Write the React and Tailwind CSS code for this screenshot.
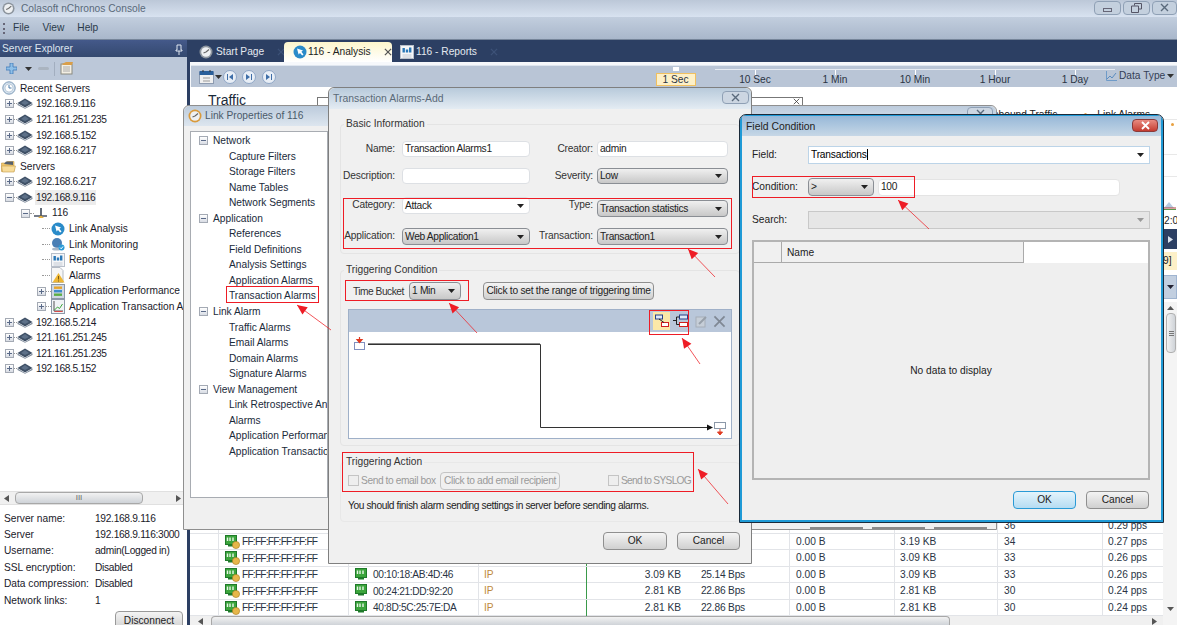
import React from "react";

const FONT = "font-['Liberation_Sans',Arial,sans-serif]";

function PlusBox({ minus }) {
  return (
    <span className="flex h-[9px] w-[9px] shrink-0 items-center justify-center border border-[#a4aab4] bg-gradient-to-b from-white to-[#d8dce4]">
      <svg width="7" height="7" viewBox="0 0 7 7">
        <path d={minus ? "M1 3.5H6" : "M1 3.5H6M3.5 1V6"} stroke="#5a6a88" strokeWidth="1" />
      </svg>
    </span>
  );
}
function Device() {
  return (
    <svg width="16" height="11" viewBox="0 0 16 11" className="shrink-0">
      <path d="M8 0.5 15.5 5 8 9.5 0.5 5Z" fill="#3f5066" />
      <path d="M0.5 5.5 8 10 15.5 5.5 15.5 7 8 10.7 0.5 7Z" fill="#7d8a9a" />
      <path d="M8 2 12 5 8 7 4 5Z" fill="#5d7088" />
    </svg>
  );
}
function Clock({ size = 14, ring = "#8d959e" }) {
  return (
    <svg width={size} height={size} viewBox="0 0 14 14" className="shrink-0">
      <circle cx="7" cy="7" r="6.5" fill={ring} />
      <circle cx="7" cy="7" r="4.8" fill="#eef0f2" />
      <path d="M7 7 10 4.5M7 7 4.5 8" stroke="#666" strokeWidth="1.1" />
    </svg>
  );
}
function Recent() {
  return (
    <svg width="14" height="14" viewBox="0 0 14 14" className="shrink-0">
      <circle cx="7" cy="7" r="6.2" fill="#d5e2ee" stroke="#7f9cb8" />
      <circle cx="7" cy="7" r="4" fill="#fff" stroke="#9db4ca" strokeWidth=".6" />
      <path d="M7 4V7H9.5" stroke="#4a7aa8" fill="none" />
    </svg>
  );
}
function Folder() {
  return (
    <svg width="15" height="13" viewBox="0 0 15 13" className="shrink-0">
      <path d="M0.5 3H5L6.5 1.5H13V11.5H0.5Z" fill="#f0c66a" stroke="#c49a4a" strokeWidth=".6" />
      <path d="M3 4 5 1.5 12 1.5 12 5Z" fill="#55606e" />
      <path d="M0.5 6H14.5L13 12H1.5Z" fill="#f7dc9a" stroke="#c49a4a" strokeWidth=".6" />
    </svg>
  );
}
function LinkIcon() {
  return (
    <svg width="14" height="12" viewBox="0 0 14 12" className="shrink-0">
      <path d="M0 9H13" stroke="#3b4656" strokeWidth="1.4" />
      <path d="M7 1V9" stroke="#3b4656" strokeWidth="1.6" />
      <path d="M4 11 7 8.5 10 11Z" fill="#e8b13c" />
    </svg>
  );
}
function AnalysisIcon({ size = 14 }) {
  return (
    <svg width={size} height={size} viewBox="0 0 14 14" className="shrink-0">
      <circle cx="7" cy="7" r="6.5" fill="#2a8bc9" />
      <path d="M4 3.5 10 5.5 8.4 6.8 10.5 9.5 9.2 10.6 7 7.9 5.6 9.5Z" fill="#fff" />
    </svg>
  );
}
function MonitorIcon() {
  return (
    <svg width="14" height="14" viewBox="0 0 14 14" className="shrink-0">
      <circle cx="6" cy="6" r="5" fill="#4a7fb5" />
      <ellipse cx="5.5" cy="12" rx="4.5" ry="1.6" fill="#aab8c8" />
      <circle cx="10.5" cy="10.5" r="3" fill="#2a9ad6" />
      <path d="M9 10.5 10.2 11.8 12 9.5" stroke="#fff" fill="none" />
    </svg>
  );
}
function ReportIcon({ size = 14 }) {
  return (
    <svg width={size} height={size} viewBox="0 0 14 14" className="shrink-0">
      <rect x=".5" y=".5" width="13" height="13" fill="#f5f6f8" stroke="#b8bfca" />
      <rect x="2.5" y="3" width="2.4" height="4.5" fill="#2a78b8" />
      <rect x="5.8" y="4.5" width="2.4" height="3" fill="#2a78b8" />
      <rect x="9" y="2.5" width="2.4" height="5" fill="#2a78b8" />
      <path d="M2.5 10H11.5M2.5 12H11.5" stroke="#c4cad4" />
    </svg>
  );
}
function AlarmIcon() {
  return (
    <svg width="14" height="16" viewBox="0 0 14 16" className="shrink-0">
      <path d="M.5.5H9L12 3.5V15.5H.5Z" fill="#f6f6f6" stroke="#b4bac4" />
      <path d="M7.5 6 13.5 15.5H1.5Z" fill="#eeb634" />
      <path d="M7.5 9V12.5M7.5 13.5V14.5" stroke="#7a5a10" />
    </svg>
  );
}
function PerfIcon() {
  return (
    <svg width="14" height="15" viewBox="0 0 14 15" className="shrink-0">
      <rect x=".5" y=".5" width="13" height="14" fill="#cfd8e4" stroke="#8c98a8" />
      <rect x="3" y="2.5" width="8" height="2.4" fill="#e8a52c" />
      <rect x="3" y="6" width="8" height="2.4" fill="#3f8ccc" />
      <rect x="3" y="9.5" width="8" height="2.4" fill="#5cae44" />
    </svg>
  );
}
function TransIcon() {
  return (
    <svg width="14" height="15" viewBox="0 0 14 15" className="shrink-0">
      <rect x=".5" y=".5" width="13" height="14" fill="#f1f3f6" stroke="#8c98a8" />
      <path d="M3 2V12H12" stroke="#555" fill="none" />
      <path d="M3.5 11 6.5 8 8.5 9.5 11.5 5" stroke="#3ba53b" fill="none" />
      <path d="M3.5 12.5H11.5" stroke="#d84a4a" />
    </svg>
  );
}
function NicIcon({ warn }) {
  return (
    <svg width="15" height="14" viewBox="0 0 15 14" className="shrink-0">
      <rect x=".5" y=".5" width="11" height="9" fill="#3ca53c" stroke="#1f7a2a" />
      <path d="M2.5 2.5V6M5 2.5V6M8 2.5V6" stroke="#e8f6e8" strokeWidth="1.4" />
      <rect x="3" y="9.5" width="6" height="2" fill="#1f7a2a" />
      {warn && <circle cx="11" cy="10" r="3.6" fill="#e6b64a" stroke="#a87a1c" strokeWidth=".6" />}
    </svg>
  );
}
function X({ size = 9, color = "#5a6a7c", width = 1.4 }) {
  return (
    <svg width={size} height={size} viewBox="0 0 9 9" className="shrink-0">
      <path d="M1 1 8 8M8 1 1 8" stroke={color} strokeWidth={width} />
    </svg>
  );
}
function Caret({ color = "#222" }) {
  return (
    <svg width="7" height="4" viewBox="0 0 7 4" className="shrink-0">
      <path d="M0 0H7L3.5 4Z" fill={color} />
    </svg>
  );
}
function Play({ dir, cls = "#9aa" }) {
  return (
    <svg width="5" height="7" viewBox="0 0 5 7" className="shrink-0">
      <path d={dir === "l" ? "M5 0V7L0 3.5Z" : "M0 0V7L5 3.5Z"} fill={cls} />
    </svg>
  );
}
function Nav({ bars }) {
  return (
    <svg width="14" height="14" viewBox="0 0 14 14" className="shrink-0">
      <circle cx="7" cy="7" r="6.5" fill="#e8eef6" stroke="#8fa6c6" />
      <path d={bars} fill="#3f6ea8" />
    </svg>
  );
}

const treeRows = [
  { x: 2, icon: <Recent />, t: "Recent Servers" },
  ...["192.168.9.116", "121.161.251.235", "192.168.5.152", "192.168.6.217"].map((t) => ({ box: 1, dev: 1, t })),
  { x: 1, icon: <Folder />, t: "Servers" },
  { box: 1, dev: 1, t: "192.168.6.217" },
  { box: 2, dev: 1, t: "192.168.9.116", sel: 1 },
  { x: 22, box: 2, icon: <LinkIcon />, t: "116", sub: 1 },
  { x: 51, icon: <AnalysisIcon />, t: "Link Analysis", lv: 1 },
  { x: 51, icon: <MonitorIcon />, t: "Link Monitoring", lv: 1 },
  { x: 51, icon: <ReportIcon />, t: "Reports", lv: 1 },
  { x: 51, icon: <AlarmIcon />, t: "Alarms", lv: 1 },
  { x: 38, box: 1, icon: <PerfIcon />, t: "Application Performance", lv: 2 },
  { x: 38, box: 1, icon: <TransIcon />, t: "Application Transaction A", lv: 2 },
  ...["192.168.5.214", "121.161.251.245", "121.161.251.235", "192.168.5.152"].map((t) => ({ box: 1, dev: 1, t })),
];

function TreeRow({ r }) {
  if (r.dev) {
    return (
      <div className="flex h-[15.6px] items-center whitespace-nowrap pl-[5px]">
        <PlusBox minus={r.box === 2} />
        <span className="w-[3px] shrink-0 border-t border-dotted border-[#999]" />
        <Device />
        <span className={`ml-[2px] px-[1px] leading-[15px] tracking-[-0.4px] ${r.sel ? "bg-[#ececec]" : ""}`}>{r.t}</span>
      </div>
    );
  }
  if (r.sub) {
    return (
      <div className="flex h-[15.6px] items-center whitespace-nowrap pl-[21px]">
        <PlusBox minus />
        <span className="w-[4px] shrink-0 border-t border-dotted border-[#999]" />
        <LinkIcon />
        <span className="ml-[4px]">{r.t}</span>
      </div>
    );
  }
  if (r.lv === 1) {
    return (
      <div className="flex h-[15.6px] items-center whitespace-nowrap pl-[42px]">
        <span className="mr-[1px] w-[8px] shrink-0 border-t border-dotted border-[#999]" />
        {r.icon}
        <span className="ml-[4px]">{r.t}</span>
      </div>
    );
  }
  if (r.lv === 2) {
    return (
      <div className="flex h-[15.6px] items-center whitespace-nowrap pl-[37px]">
        <PlusBox />
        <span className="w-[5px] shrink-0 border-t border-dotted border-[#999]" />
        {r.icon}
        <span className="ml-[4px]">{r.t}</span>
      </div>
    );
  }
  return (
    <div className="flex h-[15.6px] items-center whitespace-nowrap" style={{ paddingLeft: r.x }}>
      {r.icon}
      <span className="ml-[4px]">{r.t}</span>
    </div>
  );
}

function Sidebar() {
  const info = [
    ["Server name:", "192.168.9.116"],
    ["Server", "192.168.9.116:3000"],
    ["Username:", "admin(Logged in)"],
    ["SSL encryption:", "Disabled"],
    ["Data compression:", "Disabled"],
    ["Network links:", "1"],
  ];
  return (
    <aside className="flex h-full w-[187px] shrink-0 flex-col bg-white">
      <div className="flex h-[17px] shrink-0 items-center justify-between bg-gradient-to-b from-[#44598a] to-[#34496f] px-[2px] pt-[1px] text-[#dde4ee]">
        <span>Server Explorer</span>
        <svg width="8" height="11" viewBox="0 0 8 11" className="mr-[2px]">
          <path d="M2 1H6V6H7V7H1V6H2ZM4 7V11" stroke="#dfe6f0" fill="none" />
        </svg>
      </div>
      <div className="flex h-[23px] shrink-0 items-center bg-[#bcc8d9] pl-[6px]">
        <svg width="11" height="11" viewBox="0 0 11 11">
          <path d="M4 0H7V4H11V7H7V11H4V7H0V4H4Z" fill="#8fc0e8" stroke="#3f7ab8" strokeWidth=".8" />
        </svg>
        <span className="ml-[8px]"><Caret color="#333" /></span>
        <span className="ml-[6px] h-[3px] w-[11px] rounded-sm bg-[#aab4c0]" />
        <span className="ml-[5px] h-[14px] w-px bg-[#a2aebf]" />
        <svg width="14" height="13" viewBox="0 0 14 13" className="ml-[5px]">
          <rect x="1" y="2" width="11" height="10" fill="#f3efe4" stroke="#8a8a80" />
          <path d="M2 2 6 0H13L12 3H3Z" fill="#d99f4a" />
          <path d="M3 5H10M3 7H10M3 9H10" stroke="#aaa" />
        </svg>
      </div>
      <div className="min-h-0 flex-1 overflow-hidden pt-[0.5px] text-[#1a1a2a]">
        {treeRows.map((r, i) => (
          <TreeRow key={i} r={r} />
        ))}
      </div>
      <div className="flex h-[14px] shrink-0 items-center border-y border-[#e0e0e0] bg-[#f0f0f0] pl-[4px] pr-[6px]">
        <Play dir="l" cls="#555" />
        <span className="ml-[6px] flex h-[12px] w-[128px] items-center justify-center rounded-sm border border-[#a8a8a8] bg-gradient-to-b from-[#f2f2f2] to-[#cfd3d8] text-[8px] leading-none text-[#666]">III</span>
        <span className="flex-1" />
        <Play dir="r" cls="#555" />
      </div>
      <div className="h-[120px] shrink-0 overflow-hidden px-[4px] pt-[5px] text-[#1a1a2a]">
        {info.map(([a, b]) => (
          <div key={a} className="flex h-[16.4px] items-center whitespace-nowrap">
            <span className="w-[91px] shrink-0">{a}</span>
            <span className="tracking-[-0.3px]">{b}</span>
          </div>
        ))}
        <div className="mt-[3px] flex justify-end">
          <button className="h-[18px] w-[68px] rounded-sm border border-[#999] bg-gradient-to-b from-[#f4f4f4] to-[#d2d2d2] text-[#222]">Disconnect</button>
        </div>
      </div>
    </aside>
  );
}

function Tabs() {
  return (
    <div className="flex h-[22px] items-end bg-[#2c3f63] pl-[9px] text-[#e4e9f0]">
      <div className="flex h-[20px] w-[84px] items-center whitespace-nowrap">
        <Clock />
        <span className="ml-[3px] mr-[13px]">Start Page</span>
        <X size={8} color="#3d5278" />
      </div>
      <div className="ml-[1px] flex h-[20px] w-[108px] items-center rounded-t-sm bg-gradient-to-b from-[#fdf6cc] to-white pl-[9px] text-[#222]">
        <AnalysisIcon />
        <span className="ml-[1px] mr-[13px] whitespace-nowrap">116 - Analysis</span>
        <X size={8} color="#555" />
      </div>
      <div className="ml-[8px] flex h-[20px] items-center">
        <ReportIcon />
        <span className="ml-[2px] mr-[13px] whitespace-nowrap">116 - Reports</span>
        <X size={8} color="#3d5278" />
      </div>
    </div>
  );
}

function TimeTick({ t, w = 80 }) {
  return (
    <div className="flex flex-col items-center" style={{ width: w }}>
      <span className="h-[5px] w-px bg-white" />
      <span className="mt-[-1px] leading-[12px] text-[#2a3444]">{t}</span>
    </div>
  );
}

function Toolbar() {
  return (
    <div className="ml-[1px] mt-[3px] flex h-[22px] items-center border-t border-[#dfe6ef] bg-[#b9c5d6] pl-[8px]">
      <svg width="15" height="14" viewBox="0 0 15 14" className="shrink-0">
        <rect x=".5" y="2.5" width="14" height="11" fill="#f0f0f0" stroke="#8d9bb0" />
        <rect x=".5" y="1" width="14" height="4" fill="#2a5f9a" />
        <path d="M4 0V2M11 0V2" stroke="#333" />
        <path d="M4 8H11M4 11H11" stroke="#999" />
      </svg>
      <span className="ml-[1px]"><Caret color="#333" /></span>
      <span className="ml-[1px]"><Nav bars="M4 4H5V10H4ZM10 4V10L6 7Z" /></span>
      <span className="ml-[5px]"><Nav bars="M4 4 8 7 4 10ZM9 4H10V10H9Z" /></span>
      <span className="ml-[6px]"><Nav bars="M4 4 8 7 4 10ZM9 4H10V10H9Z" /></span>
      <div className="ml-[379px] flex items-start self-start">
        <div className="flex w-[41px] flex-col items-center">
          <span className="mt-[1px] h-[4px] w-[6px] bg-white" />
          <span className="mt-[2px] h-[13px] w-[40px] border border-[#f0c060] bg-[#fdf0c8] text-center leading-[12px] text-[#2a3444]">1 Sec</span>
        </div>
        <div className="ml-[19px] mt-[3px] flex border-t border-[#e6ebf2]">
          <TimeTick t="10 Sec" />
          <TimeTick t="1 Min" />
          <TimeTick t="10 Min" />
          <TimeTick t="1 Hour" />
          <TimeTick t="1 Day" w={80} />
        </div>
      </div>
      <div className="mb-[1px] ml-[-9px] flex items-center text-[#344056]">
        <svg width="11" height="10" viewBox="0 0 11 10" className="shrink-0">
          <path d="M.5 0V9.5H11" stroke="#6f9bc8" fill="none" />
          <path d="M1 8 4 5 6 7 10 2" stroke="#5a8cc0" fill="none" />
        </svg>
        <span className="ml-[2px] mr-[2px] whitespace-nowrap">Data Type</span>
        <Caret color="#333" />
      </div>
    </div>
  );
}

const rows = [
  { s: "36", p: "0.29 pps", hide: 1 },
  { s: "34", p: "0.27 pps", z: "3.19 KB", mac: 1 },
  { s: "33", p: "0.26 pps", z: "3.09 KB", mac: 1 },
  { s: "33", p: "0.26 pps", z: "3.09 KB", mac: 1, d: "00:10:18:AB:4D:46", a: "3.09 KB", b: "25.14 Bps" },
  { s: "30", p: "0.24 pps", z: "2.81 KB", mac: 1, d: "00:24:21:DD:92:20", a: "2.81 KB", b: "22.86 Bps" },
  { s: "30", p: "0.24 pps", z: "2.81 KB", mac: 1, d: "40:8D:5C:25:7E:DA", a: "2.81 KB", b: "22.86 Bps" },
];

function Table() {
  return (
    <div className="shrink-0 text-[#2a3444]">
      {rows.map((r, i) => (
        <div key={i} className="grid h-[16.4px] grid-cols-[29px_130px_130px_107px_99px_105px_105px_103px_105px_60px] items-center border-b border-[#e2e4e8] whitespace-nowrap">
          <span className="h-full border-r border-[#e2e4e8]" />
          <span className="flex h-full items-center gap-[2px] border-r border-[#e2e4e8] pl-[6px] tracking-[-0.8px]">
            {!r.hide && <NicIcon warn />}{!r.hide && "FF:FF:FF:FF:FF:FF"}
          </span>
          <span className="flex h-full items-center gap-[3px] border-r border-[#e2e4e8] pl-[6px] tracking-[-0.35px]">
            {r.d && <NicIcon />}{r.d}
          </span>
          <span className="h-full pl-[5px] leading-[16px] text-[#c08a3c]">{r.d && "IP"}</span>
          <span className="h-full border-l border-[#3a9a4a] pr-[4px] text-right leading-[16px]">{r.a}</span>
          <span className="h-full border-r border-[#e2e4e8] pr-[44px] text-right leading-[16px] tracking-[-0.2px]">{r.b}</span>
          <span className="h-full border-r border-[#e2e4e8] pl-[6px] leading-[16px]">{r.mac && "0.00 B"}</span>
          <span className="h-full border-r border-[#e2e4e8] pl-[5px] leading-[16px]">{r.z}</span>
          <span className="h-full border-r border-[#e2e4e8] pl-[6px] leading-[16px]">{r.s}</span>
          <span className="h-full pl-[5px] leading-[16px]">{r.p}</span>
        </div>
      ))}
    </div>
  );
}

function RightStrip() {
  return (
    <div className="flex w-[14px] shrink-0 flex-col overflow-hidden bg-white text-[#222]">
      <div className="h-[32px] shrink-0" />
      <div className="flex h-[35px] shrink-0 justify-end border-t border-[#e8e8e8] pr-[3px] pt-[3px]">
        <span className="h-[3px] w-[3px] rounded-full bg-[#e8a040]" />
      </div>
      <div className="h-[22px] shrink-0 border-t border-[#e8e8e8]" />
      <div className="flex h-[34px] shrink-0 items-end justify-center border-t border-[#e8e8e8]">
        <svg width="12" height="9" viewBox="0 0 12 9">
          <path d="M0 7 5 1 10 7Z" fill="#b8cbe0" />
          <path d="M0 7H12" stroke="#b04040" />
          <path d="M0 8.5H12" stroke="#5a9a4a" />
        </svg>
      </div>
      <div className="h-[19px] shrink-0 whitespace-nowrap pl-[1px] pt-[4px] leading-[14px]">2:00</div>
      <div className="flex h-[20px] shrink-0 items-center justify-center bg-[#2c3f63]"><Play dir="r" cls="#dbe3ee" /></div>
      <div className="mt-[3px] h-[18px] shrink-0 bg-[#fdf0c8] leading-[18px]">9]</div>
      <div className="mt-[5px] flex h-[24px] shrink-0 items-center justify-center border border-[#9fb4d0] bg-[#c2cfe0]"><Caret color="#223" /></div>
      <div className="mt-[3px] flex min-h-0 flex-1 flex-col items-center bg-[#f4f4f4] pt-[4px]">
        <svg width="7" height="4" viewBox="0 0 7 4" className="shrink-0"><path d="M0 4H7L3.5 0Z" fill="#555" /></svg>
        <div className="ml-[2px] mt-[3px] flex h-[40px] w-[10px] shrink-0 flex-col items-center justify-center gap-[1px] rounded-sm border border-[#b0b0b0] bg-gradient-to-r from-[#f2f2f2] to-[#cfd3d8]">
          <span className="h-px w-[5px] bg-[#777]" /><span className="h-px w-[5px] bg-[#777]" /><span className="h-px w-[5px] bg-[#777]" />
        </div>
        <div className="flex-1" />
        <span className="mb-[14px]"><Caret color="#555" /></span>
      </div>
    </div>
  );
}

function Main() {
  return (
    <main className="flex h-full min-w-0 flex-1 flex-col border-l-[3px] border-[#2c3f63] bg-[#2c3f63]">
      <Tabs />
      <div className="flex min-h-0 flex-1 flex-col bg-[#f6f8fb]">
        <Toolbar />
        <div className="flex min-h-0 flex-1 bg-white">
          <div className="flex min-w-0 flex-1 flex-col">
            <div className="min-h-0 flex-1">
              <div className="flex h-[20px] pl-[18px]">
                <span className="mt-[4px] text-[14px] leading-[18px] text-[#1a2a3a]">Traffic</span>
                <div className="ml-[71px] mt-[10px] flex h-[10px] w-[486px] shrink-0 items-start justify-end border border-b-0 border-[#777] pr-[2px]">
                  <X size={7} color="#333" width={1} />
                </div>
              </div>
              <div className="mt-[1px] flex h-[12px] justify-end overflow-hidden whitespace-nowrap pr-[13px] leading-[14px] text-[#222]">
                <span>Inbound Traffic</span>
                <span className="ml-[27px] mt-[5px] h-[3px] w-[3px] rounded-full bg-[#e8a040]" />
                <span className="ml-[10px]">Link Alarms</span>
              </div>
            </div>
            <Table />
            <div className="flex h-[9px] shrink-0 items-start bg-[#f0f0f0] pl-[8px]">
              <span className="mt-[2px]"><Play dir="l" cls="#555" /></span>
              <span className="ml-[8px] h-[9px] w-[739px] rounded-t-sm border border-b-0 border-[#a8a8a8] bg-gradient-to-b from-[#f2f2f2] to-[#cfd3d8]" />
              <span className="flex-1" />
              <span className="mr-[6px] mt-[2px]"><Play dir="r" cls="#555" /></span>
            </div>
          </div>
          <RightStrip />
        </div>
      </div>
    </main>
  );
}

const linkTree = [
  ["Network", ["Capture Filters", "Storage Filters", "Name Tables", "Network Segments"]],
  ["Application", ["References", "Field Definitions", "Analysis Settings", "Application Alarms", "Transaction Alarms"]],
  ["Link Alarm", ["Traffic Alarms", "Email Alarms", "Domain Alarms", "Signature Alarms"]],
  ["View Management", ["Link Retrospective Analysis", "Alarms", "Application Performance Analysis", "Application Transaction Analysis"]],
];

function LinkDialog() {
  return (
    <section className="absolute left-[183px] top-[105px] flex h-[425px] w-[814px] flex-col rounded-t-md border border-[#8f8f8f] bg-[#f0f0f0]">
      <div className="flex h-[20px] shrink-0 items-center rounded-t-md bg-gradient-to-b from-[#bccbdc] to-[#dde6ef] pl-[4px] text-[#4a5a6a]">
        <Clock size={14} ring="#d99a3c" />
        <span className="ml-[3px]">Link Properties of 116</span>
        <span className="flex-1" />
        <span className="mr-[3px] mt-[-5px] flex h-[13px] w-[26px] items-center justify-center rounded-sm border border-[#8fa0b5] bg-[#ccd6e2]"><X /></span>
      </div>
      <div className="ml-[6px] mt-[5px] h-[367px] w-[138px] overflow-hidden border border-[#a8acb2] bg-white pl-[8px] pt-[1px] text-[#1a2a3a]">
        {linkTree.map(([h, items]) => (
          <div key={h}>
            <div className="flex h-[15.55px] items-center whitespace-nowrap">
              <PlusBox minus />
              <span className="ml-[5px]">{h}</span>
            </div>
            {items.map((t) => (
              <div key={t} className="h-[15.55px] whitespace-nowrap pl-[30px] leading-[15.55px]">{t}</div>
            ))}
          </div>
        ))}
      </div>
      <div className="mr-[9px] mt-auto flex justify-end gap-[9px]">
        {[0, 1, 2].map((i) => (
          <span key={i} className="h-[2px] w-[53px] bg-[#8a8a8a]" />
        ))}
      </div>
    </section>
  );
}

function Inp({ children, cls = "" }) {
  return <div className={`flex h-full items-center whitespace-nowrap rounded-sm border border-[#dde0e4] bg-white pl-[2px] tracking-[-0.3px] text-[#222] ${cls}`}>{children}</div>;
}
function Sel({ children, cls = "" }) {
  return (
    <div className={`flex h-full items-center justify-between whitespace-nowrap rounded-sm border border-[#8a8e94] bg-gradient-to-b from-[#f0f0f0] to-[#c8c8c8] pl-[2px] pr-[5px] tracking-[-0.3px] text-[#222] ${cls}`}>
      <span>{children}</span>
      <Caret />
    </div>
  );
}
function Btn({ children, cls = "" }) {
  return (
    <button className={`flex h-[18px] items-center justify-center whitespace-nowrap rounded-sm border border-[#8f8f8f] bg-gradient-to-b from-[#f4f4f4] to-[#d0d0d0] text-[#222] ${cls}`}>
      {children}
    </button>
  );
}
function FormRow({ h, mt, a, b, c, d }) {
  return (
    <div className="flex items-start" style={{ height: h, marginTop: mt }}>
      <span className="w-[54px] shrink-0 whitespace-nowrap text-right leading-[16px] tracking-[-0.15px] text-[#333]">{a}</span>
      <div className="ml-[7px] w-[128px] shrink-0">{b}</div>
      <span className="w-[63px] shrink-0 whitespace-nowrap text-right leading-[16px] tracking-[-0.15px] text-[#333]">{c}</span>
      <div className="ml-[4px] w-[131px] shrink-0">{d}</div>
    </div>
  );
}

function TransDialog() {
  return (
    <section className="absolute left-[328px] top-[87px] flex h-[477px] w-[424px] flex-col rounded-t-md border border-[#7f7f7f] bg-[#f0f0f0]">
      <div className="flex h-[21px] shrink-0 items-center justify-between rounded-t-md bg-gradient-to-b from-[#b8cadb] to-[#e4ecf3] pl-[4px] pr-[2px] text-[10.4px] text-[#5a6a78]">
        <span>Transaction Alarms-Add</span>
        <span className="mb-[3px] flex h-[13px] w-[27px] items-center justify-center rounded-sm border border-[#8fa0b5] bg-[#ccd6e2]"><X /></span>
      </div>
      <div className="px-[11px]">
        <fieldset className="mt-[8px] rounded-sm border border-[#e4e4e4]">
          <legend className="ml-[3px] px-[2px] leading-[14px] text-[#333]">Basic Information</legend>
          <div className="pb-[8px] pt-[10px]">
            <FormRow h={16} mt={0} a="Name:" b={<div className="h-[16px]"><Inp>Transaction Alarms1</Inp></div>} c="Creator:" d={<div className="h-[16px]"><Inp>admin</Inp></div>} />
            <FormRow h={16} mt={11} a="Description:" b={<div className="h-[16px]"><Inp /></div>} c="Severity:" d={<div className="h-[16px]"><Sel>Low</Sel></div>} />
            <FormRow h={20} mt={13} a="Category:" b={<div className="h-[17px]"><Inp cls="justify-between pr-[5px]"><span>Attack</span><Caret /></Inp></div>} c="Type:" d={<div className="mt-[3px] h-[17px]"><Sel>Transaction statistics</Sel></div>} />
            <FormRow h={17} mt={11} a="Application:" b={<div className="h-[17px]"><Sel>Web Application1</Sel></div>} c="Transaction:" d={<div className="h-[17px]"><Sel>Transaction1</Sel></div>} />
          </div>
        </fieldset>

        <fieldset className="mt-[9px] rounded-sm border border-[#e4e4e4] px-[7px] pb-[6px]">
          <legend className="ml-[-4px] px-[2px] leading-[14px] text-[#333]">Triggering Condition</legend>
          <div className="mt-[4px] flex h-[19px] items-center">
            <span className="ml-[5px] mt-[3px] w-[56px] shrink-0 whitespace-nowrap tracking-[-0.5px] text-[#333]">Time Bucket</span>
            <div className="h-[18px] w-[52px] shrink-0"><Sel>1 Min</Sel></div>
            <Btn cls="ml-[22px] w-[171px] shrink-0 tracking-[-0.25px]">Click to set the range of triggering time</Btn>
          </div>
          <div className="mt-[9px] h-[130px] w-[384px] border border-[#9fb0c8] bg-white">
            <div className="flex h-[22px] items-center justify-end bg-[#b9c7da] pr-[5px]">
              <span className="flex h-[18px] w-[17px] items-center justify-center bg-[#fbe8a8]">
                <svg width="14" height="14" viewBox="0 0 14 14">
                  <rect x=".5" y="1" width="7" height="4" fill="#dfe8f5" stroke="#27408a" />
                  <rect x="6.5" y="8.5" width="7" height="4" fill="#fff" stroke="#d02020" />
                  <path d="M4 5 9 8.5" stroke="#222" />
                </svg>
              </span>
              <span className="ml-[3px] flex h-[18px] w-[15px] items-center justify-center">
                <svg width="15" height="14" viewBox="0 0 15 14">
                  <rect x="6.5" y="1" width="8" height="4" fill="#dfe8f5" stroke="#27408a" />
                  <rect x="6.5" y="8.5" width="8" height="4" fill="#fff" stroke="#d02020" />
                  <path d="M6.5 3H3.5V10.5H6.5M0 6.5H3.5" stroke="#222" fill="none" />
                </svg>
              </span>
              <svg width="13" height="13" viewBox="0 0 13 13" className="ml-[7px]">
                <rect x="1" y="2" width="9" height="10" fill="#c6ced8" stroke="#a6aeb8" />
                <path d="M4 9 11 2" stroke="#98a0aa" strokeWidth="2" />
              </svg>
              <span className="ml-[5px]"><X size={13} color="#7f8894" width={1.2} /></span>
            </div>
            <svg width="382" height="106" viewBox="0 0 382 106" className="block">
              <rect x="5.5" y="10.5" width="10" height="7" fill="#fff" stroke="#8090c0" />
              <path d="M10.5 5V9M8 7.5 10.5 10.5 13 7.5Z" stroke="#e03a20" fill="#e03a20" strokeWidth="1.2" />
              <path d="M19 12.5H191.5V95.5H358" stroke="#333" fill="none" />
              <path d="M19 11.5H191" stroke="#888" fill="none" />
              <path d="M358 92.5 364 95.5 358 98.5Z" fill="#111" />
              <rect x="365.5" y="90.5" width="11" height="6" fill="#fff" stroke="#8c98a8" />
              <path d="M371 97V101M368.5 100 371 103 373.5 100Z" stroke="#e03a20" fill="#e03a20" />
            </svg>
          </div>
        </fieldset>

        <fieldset className="mt-[9px] rounded-sm border border-[#e8e8e8] px-[7px] pb-[8px]">
          <legend className="ml-[-4px] px-[2px] leading-[14px] text-[#333]">Triggering Action</legend>
          <div className="mt-[2px] flex h-[19px] items-center text-[#9a9a9a]">
            <span className="h-[11px] w-[11px] shrink-0 border border-[#c4c4c4] bg-[#eeeeee]" />
            <span className="ml-[2px] w-[79px] shrink-0 whitespace-nowrap tracking-[-0.4px]">Send to email box</span>
            <span className="flex h-[18px] w-[120px] shrink-0 items-center justify-center whitespace-nowrap rounded-sm border border-[#c4c4c4] tracking-[-0.35px]">Click to add email recipient</span>
            <span className="ml-[48px] h-[11px] w-[11px] shrink-0 border border-[#c4c4c4] bg-[#eeeeee]" />
            <span className="ml-[2px] whitespace-nowrap tracking-[-0.7px]">Send to SYSLOG</span>
          </div>
          <div className="mt-[9px] whitespace-nowrap leading-[14px] tracking-[-0.4px] text-[#222]">You should finish alarm sending settings in server before sending alarms.</div>
        </fieldset>

        <div className="mt-[10px] flex justify-end gap-[10px]">
          <Btn cls="w-[64px]">OK</Btn>
          <Btn cls="w-[63px]">Cancel</Btn>
        </div>
      </div>
    </section>
  );
}

function FieldDialog() {
  return (
    <section className="absolute left-[740px] top-[115px] flex h-[407px] w-[423px] flex-col rounded-t-md border-2 border-t border-[#1f9ad6] bg-[#efefef] outline outline-1 outline-[#1a2a3a]">
      <div className="flex h-[20px] shrink-0 items-center justify-between bg-gradient-to-b from-[#97b8d8] to-[#c6d7e6] pl-[4px] pr-[3px] text-[10.4px] text-[#222]">
        <span className="pt-[1px]">Field Condition</span>
        <span className="mb-[2px] flex h-[13px] w-[26px] items-center justify-center rounded-sm border border-[#8a3a3a] bg-gradient-to-b from-[#e88a80] to-[#c43a30]"><X color="#fff" width={1.8} /></span>
      </div>
      <div className="px-[10px]">
        <div className="mt-[10px] flex h-[18px] items-center">
          <span className="w-[56px] text-[#222]">Field:</span>
          <div className="flex h-full w-[342px] items-center justify-between border border-[#bcd4e8] bg-white pl-[2px] pr-[5px] tracking-[-0.2px]">
            <span>Transactions<span className="border-l border-black" /></span>
            <Caret />
          </div>
        </div>
        <div className="mt-[14px] flex h-[18px] items-center">
          <span className="w-[56px] text-[#222]">Condition:</span>
          <div className="h-full w-[66px]"><Sel>&gt;</Sel></div>
          <div className="ml-[4px] h-[17px] w-[242px]"><Inp cls="border-[#e4e4e4]">100</Inp></div>
        </div>
        <div className="mt-[15px] flex h-[18px] items-center">
          <span className="w-[56px] text-[#222]">Search:</span>
          <div className="flex h-full w-[342px] items-center justify-between border border-[#c8c8c8] bg-[#e6e6e6] pr-[5px]">
            <span />
            <Caret color="#999" />
          </div>
        </div>
        <div className="mt-[11px] flex h-[240px] w-[398px] flex-col border-2 border-[#b4b4b4]">
          <div className="flex h-[21px] shrink-0 bg-white">
            <span className="w-[28px] border-b border-r border-[#aaa] bg-[#f0f0f0]" />
            <span className="w-[242px] border-b border-r border-[#aaa] bg-[#f0f0f0] pl-[5px] leading-[21px] text-[#222]">Name</span>
          </div>
          <div className="flex flex-1 items-center justify-center text-[#222]">No data to display</div>
        </div>
        <div className="mt-[11px] flex justify-end gap-[10px] pr-[2px]">
          <Btn cls="w-[63px] !border-[#2a9ad6] !from-[#e4f4fc] !to-[#b6dcf2]">OK</Btn>
          <Btn cls="w-[63px]">Cancel</Btn>
        </div>
      </div>
    </section>
  );
}

function Annotations() {
  const rects = [
    "left-[226px] top-[286px] h-[17px] w-[93px]",
    "left-[343px] top-[198px] h-[51px] w-[389px]",
    "left-[345px] top-[280px] h-[21px] w-[124px]",
    "left-[649px] top-[310px] h-[25px] w-[40px]",
    "left-[342px] top-[452px] h-[40px] w-[352px]",
    "left-[752px] top-[176px] h-[22px] w-[163px]",
  ];
  const arrows = [
    [331, 330, 297, 305],
    [715, 277, 688, 249],
    [477, 333, 449, 303],
    [700, 364, 682, 338],
    [728, 504, 698, 469],
    [929, 229, 898, 200],
  ];
  return (
    <>
      {rects.map((c) => (
        <div key={c} className={`pointer-events-none absolute border border-[#ee1c25] ${c}`} />
      ))}
      <svg width="1177" height="625" viewBox="0 0 1177 625" className="pointer-events-none absolute left-0 top-0">
        {arrows.map(([x1, y1, x2, y2], i) => {
          const a = Math.atan2(y2 - y1, x2 - x1);
          const L = 11, W = 0.42;
          const p1 = [x2 - L * Math.cos(a - W), y2 - L * Math.sin(a - W)];
          const p2 = [x2 - L * Math.cos(a + W), y2 - L * Math.sin(a + W)];
          return (
            <g key={i}>
              <line x1={x1} y1={y1} x2={x2} y2={y2} stroke="#ee2a30" strokeWidth="0.8" />
              <polygon points={`${x2},${y2} ${p1.join(",")} ${p2.join(",")}`} fill="#ee1c25" />
            </g>
          );
        })}
      </svg>
    </>
  );
}

export default function App() {
  return (
    <div className={`relative flex h-[625px] w-[1177px] flex-col overflow-hidden bg-white text-[10.2px] ${FONT}`}>
      <header className="h-[39px] shrink-0">
        <div className="flex h-[17px] items-center justify-between bg-gradient-to-b from-[#bcc8d8] to-[#d8e2f0] pl-[2px]">
          <div className="flex items-center">
            <Clock size={13} />
            <span className="ml-[6px] text-[#5a6a7a]">Colasoft nChronos Console</span>
          </div>
          <div className="mb-[2px] flex gap-[2px]">
            <span className="flex h-[14px] w-[27px] items-end justify-center rounded-sm border border-[#8fa0b5] bg-[#c4d0de] pb-[2px]"><span className="h-[4px] w-[9px] border border-[#667]" /></span>
            <span className="flex h-[14px] w-[27px] items-center justify-center rounded-sm border border-[#8fa0b5] bg-[#c4d0de]">
              <svg width="11" height="10" viewBox="0 0 11 10"><path d="M3.5 2.5V.5H10.5V6H8M.5 3H7.5V9.5H.5Z" stroke="#556" fill="none" /></svg>
            </span>
            <span className="flex h-[14px] w-[25px] items-center justify-center rounded-sm border border-[#8fa0b5] bg-[#c4d0de]"><X /></span>
          </div>
        </div>
        <div className="flex h-[22px] items-center bg-gradient-to-b from-[#c2cede] to-[#a9b7cb] pl-[3px] text-[#2a3a4a]">
          <span className="h-[11px] w-[2px] border-l-2 border-dotted border-[#667]" />
          <span className="ml-[8px]">File</span>
          <span className="ml-[13px]">View</span>
          <span className="ml-[13px]">Help</span>
        </div>
      </header>
      <div className="flex min-h-0 flex-1 border-t border-[#76859a]">
        <Sidebar />
        <Main />
      </div>
      <LinkDialog />
      <TransDialog />
      <FieldDialog />
      <Annotations />
    </div>
  );
}
